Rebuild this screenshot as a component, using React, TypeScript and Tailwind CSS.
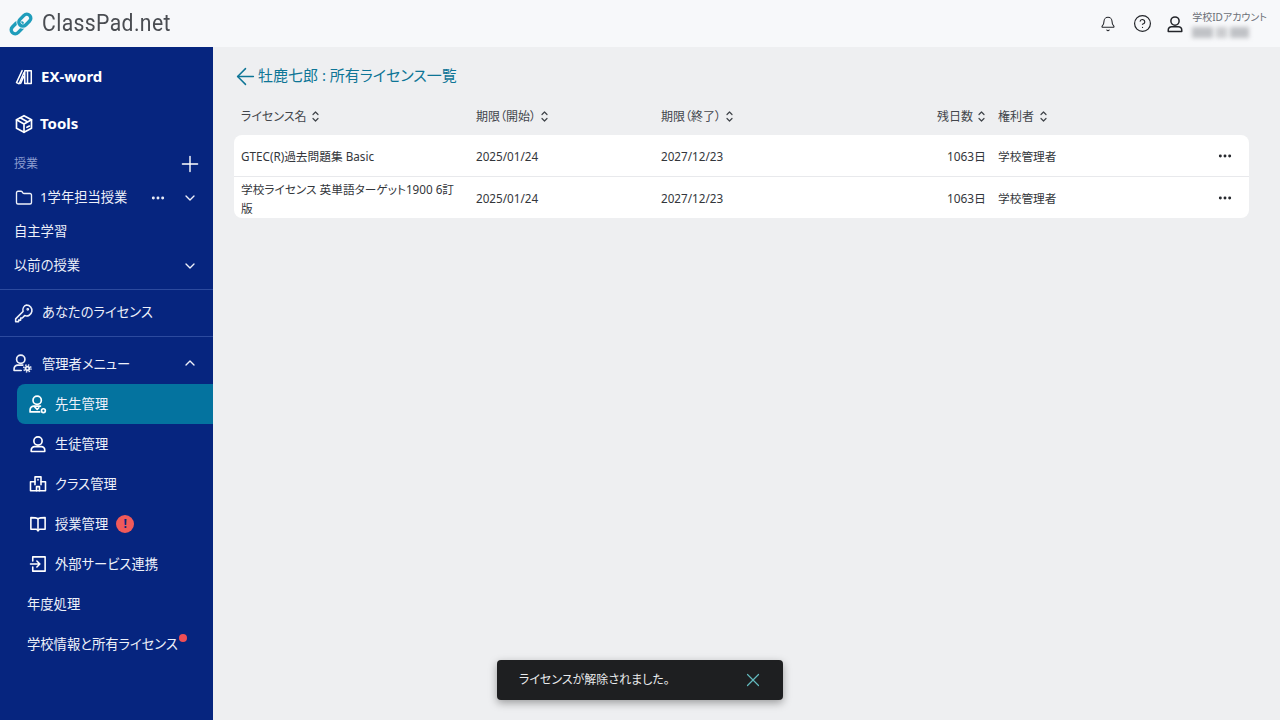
import { ArrowLeft, Bell, ChevronDown, ChevronUp, CircleHelp, Ellipsis, Folder, Plus, X } from 'lucide-react'
import type { ReactNode } from 'react'

const font = "font-['Noto_Sans','Noto_Sans_CJK_JP',sans-serif] [font-feature-settings:'palt']"

function Svg({ children, size = 18, width = 2.1 }: { children: ReactNode; size?: number; width?: number }) {
  return (
    <svg width={size} height={size} viewBox="0 0 24 24" fill="none" stroke="currentColor" strokeWidth={width} strokeLinecap="round" strokeLinejoin="round" className="shrink-0">
      {children}
    </svg>
  )
}

const UserIcon = ({ size = 18, width = 2.2 }: { size?: number; width?: number }) => (
  <Svg size={size} width={width}>
    <circle cx="12" cy="8" r="5.500" />
    <path d="M3 22v-2a4.500 4.500 0 0 1 4.500-4.500h9A4.500 4.500 0 0 1 21 20v2z" />
  </Svg>
)

// admin menu icon: person with a gear
const UserGear = () => (
  <Svg size={20} width={2}>
    <circle cx="10.500" cy="7.500" r="5" />
    <path d="M11 21H2.500v-2a4.500 4.500 0 0 1 4.500-4.500h6" />
    <circle cx="18.500" cy="18.500" r="3.300" fill="currentColor" stroke="none" />
    <circle cx="18.500" cy="18.500" r="1.100" fill="#06257f" stroke="none" />
    <circle cx="18.500" cy="18.500" r="4.300" strokeWidth="1.800" strokeDasharray="1.700 1.700" strokeLinecap="butt" />
  </Svg>
)

// teacher icon: person with a small tag at the lower right
const UserTag = () => (
  <Svg size={20} width={2}>
    <circle cx="11" cy="7.500" r="5" />
    <path d="M14 21.500H2.500v-2.500a4.500 4.500 0 0 1 4.500-4.500h8" />
    <path d="m7.500 15 3.500 3.500 2-2" />
    <circle cx="18.500" cy="20" r="2.300" />
  </Svg>
)

const KeyIcon = () => (
  <Svg size={20} width={1.9}>
    <path d="M15 2.500a6.500 6.500 0 1 1-2.200 12.600L10 18H8v2.500H5.500v2H2V19l8.800-8.800A6.500 6.500 0 0 1 15 2.500z" />
    <circle cx="16.500" cy="7.500" r="0.700" />
  </Svg>
)

const ExWordIcon = () => (
  <Svg size={18} width={2}>
    <path d="M9.500 3.500 2 19.500l3.500 1.500L12 6" />
    <path d="M13 3.500h3.700v17H13zM16.700 3.500h5v17h-5zM7.500 20.500l4-9" />
  </Svg>
)

const BoxIcon = () => (
  <Svg size={20} width={2}>
    <path d="m12 2 9 4.800v10.400L12 22l-9-4.800V6.800z" />
    <path d="M3 7l9 5 9-5M12 12v10M7.500 4.500l9 5M15.500 16l3-1.600" />
  </Svg>
)

const ClassIcon = () => (
  <Svg>
    <path d="M8 9V2.500h8V9h6v12H2V9z" />
    <path d="M8 9v4M16 9v4M10 21v-5.500h4V21M12 6v.5" />
  </Svg>
)

const BookIcon = () => (
  <Svg>
    <path d="M12 5C10 3.800 7 3.500 2.500 3.500v15.500H10l2 2 2-2h7.500V3.500C17 3.500 14 3.800 12 5z" />
    <path d="M12 5v16" />
  </Svg>
)

const ImportIcon = () => (
  <Svg>
    <path d="M5 8V2.500h16.500v19H5V16" />
    <path d="M2 12h12.500M10.500 8l4 4-4 4" />
  </Svg>
)

const SortIcon = () => (
  <svg width="7" height="11" viewBox="0 0 7 11" fill="none" stroke="#3f4349" strokeWidth="1.200" strokeLinecap="round" strokeLinejoin="round" className="shrink-0">
    <path d="M1 3.500 3.500 1 6 3.500M1 7.500 3.500 10 6 7.500" />
  </svg>
)

const Logo = () => (
  <svg width="24" height="24" viewBox="0 0 24 24" fill="none" strokeWidth="3.400" className="shrink-0">
    <g transform="rotate(-45 12 12)">
      <rect x="-0.200" y="8" width="13.600" height="8" rx="4" stroke="#1f9dbb" />
      <rect x="10.600" y="8" width="13.600" height="8" rx="4" stroke="#f7f8fa" strokeWidth="5" />
      <rect x="10.600" y="8" width="13.600" height="8" rx="4" stroke="#1f9dbb" />
    </g>
  </svg>
)

function NavRow({ icon, label, active, badge }: { icon?: ReactNode; label: string; active?: boolean; badge?: ReactNode }) {
  return (
    <div className={`ml-[17px] h-10 flex items-center rounded-l-lg ${icon ? 'pl-[12px] gap-[8px]' : 'pl-[10px]'} ${active ? 'bg-[#04739f]' : ''}`}>
      {icon}
      <span className="text-[13.300px] text-[#eef1fa] whitespace-nowrap pt-[2px]">{label}</span>
      {badge}
    </div>
  )
}

const headers = ['ライセンス名', '期限（開始）', '期限（終了）']
const rows = [
  { name: 'GTEC(R)過去問題集 Basic' },
  { name: '学校ライセンス 英単語ターゲット1900 6訂版' },
]
const gridCols = 'grid grid-cols-[235px_185px_264px_61px_1fr_32px] pl-[7px] items-center'

export default function App() {
  return (
    <div className={`${font} h-[720px] w-[1280px] overflow-hidden relative flex flex-col bg-[#eeeff1]`}>
      {/* Header */}
      <header className="h-[47px] shrink-0 bg-[#f7f8fa] flex items-center pl-[9px] pr-[13px]">
        <Logo />
        <span className="ml-[9px] inline-block origin-left scale-x-[0.92] font-['Roboto',sans-serif] text-[23px] tracking-[0.4px] text-[#4a4d52] leading-none">ClassPad.net</span>
        <div className="ml-auto flex items-center text-[#23252a]">
          <Bell size={16} strokeWidth={1.6} />
          <span className="ml-[17px]"><CircleHelp size={19} strokeWidth={1.5} /></span>
          <span className="ml-[14px]"><UserIcon size={18} width={2} /></span>
          <div className="ml-[8px] flex flex-col">
            <span className="text-[10px] leading-[14px] text-[#6b6f76]">学校IDアカウント</span>
            <div className="mt-[3px] flex gap-[3px] blur-[2px]">
              <div className="h-[11px] w-[21px] bg-[#c0c2c6]" />
              <div className="h-[11px] w-[11px] bg-[#cccdd0]" />
              <div className="h-[11px] w-[19px] bg-[#c0c2c6]" />
            </div>
          </div>
        </div>
      </header>

      <div className="flex flex-1 min-h-0">
        {/* Sidebar */}
        <aside className="w-[213px] shrink-0 bg-[#06257f] text-white flex flex-col">
          <div className="h-[53px] mt-[3px] flex items-center gap-[8px] pl-[15px] font-bold text-[15px]"><ExWordIcon />EX-word</div>
          <div className="h-[41px] flex items-center gap-[6px] pl-[14px] font-bold text-[15px]"><BoxIcon />Tools</div>
          <div className="h-[40px] flex items-center justify-between pl-[14px] pr-[10px]">
            <span className="text-[12px] text-[#8c9dd0]">授業</span>
            <Plus size={26} strokeWidth={1.3} />
          </div>
          <div className="h-[28px] flex items-center pl-[15px] pr-[15px] text-[#eef1fa]">
            <Folder size={18} strokeWidth={1.8} />
            <span className="ml-[7px] text-[13.300px] pb-[1px]">1学年担当授業</span>
            <Ellipsis size={16} strokeWidth={2.4} className="ml-auto mr-[16px]" />
            <ChevronDown size={16} strokeWidth={2} />
          </div>
          <div className="h-[40px] flex items-center pl-[14px] text-[13.300px] text-[#eef1fa]">自主学習</div>
          <div className="h-[28px] flex items-center justify-between pl-[14px] pr-[15px] text-[13.300px] text-[#eef1fa]">
            以前の授業
            <ChevronDown size={16} strokeWidth={2} />
          </div>
          <div className="mt-[9px] border-t border-[#2c4a9e]" />
          <div className="h-[46px] flex items-center gap-[8px] pl-[14px] text-[13.300px] text-[#eef1fa]">
            <KeyIcon />
            <span>あなたのライセンス</span>
          </div>
          <div className="border-t border-[#2c4a9e]" />
          <div className="h-[47px] pt-[5px] flex items-center pl-[12px] pr-[15px] text-[13.300px] text-[#eef1fa]">
            <UserGear />
            <span className="ml-[10px] pt-[4px]">管理者メニュー</span>
            <ChevronUp size={16} strokeWidth={2} className="ml-auto" />
          </div>
          <div className="flex flex-col [&>div:first-child]:gap-[7px] [&>div:first-child]:pl-[11px]">
            <NavRow active icon={<UserTag />} label="先生管理" />
          </div>
          <NavRow icon={<UserIcon />} label="生徒管理" />
          <NavRow icon={<ClassIcon />} label="クラス管理" />
          <NavRow
            icon={<BookIcon />}
            label="授業管理"
            badge={<span className="w-[18px] h-[18px] rounded-full bg-[#f05a5a] text-[#06257f] text-[12px] font-bold flex items-center justify-center">!</span>}
          />
          <NavRow icon={<ImportIcon />} label="外部サービス連携" />
          <NavRow label="年度処理" />
          <div className="relative">
            <NavRow label="学校情報と所有ライセンス" />
            <span className="absolute left-[179px] top-[10px] w-2 h-2 rounded-full bg-[#ef4e55]" />
          </div>
        </aside>

        {/* Main */}
        <main className="flex-1 min-w-0 pl-[21px] pr-[31px]">
          <div className="mt-[17px] h-6 flex items-center text-[#0d7596] -ml-[2px]">
            <ArrowLeft size={27} strokeWidth={1.3} />
            <span className="text-[15px] pb-[1px] -ml-[1px]">牡鹿七郎 : 所有ライセンス一覧</span>
          </div>

          <div className={`${gridCols} mt-[16px] h-[24px] text-[12px] text-[#43464c]`}>
            {headers.map((h) => (
              <div key={h} className="flex items-center gap-[5px]"><span className="pt-[2px]">{h}</span><SortIcon /></div>
            ))}
            <div className="flex items-center justify-end gap-[5px] pr-[1px]"><span className="pt-[2px]">残日数</span><SortIcon /></div>
            <div className="flex items-center gap-[6px] pl-3"><span className="pt-[2px]">権利者</span><SortIcon /></div>
            <div />
          </div>

          <div className="mt-[7px] bg-white rounded-lg text-[11.700px] text-[#33363b]">
            {rows.map((r, i) => (
              <div key={r.name} className={`${gridCols} h-[41px] ${i > 0 ? 'border-t border-[#e8e9ec] box-content' : ''}`}>
                <div className={`pr-[18px] leading-[19px] ${i > 0 ? 'pt-[3px]' : 'pt-[2px]'}`}>{r.name}</div>
                <div className="pt-[2px]">2025/01/24</div>
                <div className="pt-[2px]">2027/12/23</div>
                <div className="text-right pt-[2px] text-[11.900px]">1063日</div>
                <div className="pl-3 pt-[2px]">学校管理者</div>
                <div className="text-[#23252a]"><Ellipsis size={16} strokeWidth={2.4} /></div>
              </div>
            ))}
          </div>
        </main>
      </div>

      {/* Toast */}
      <div className="absolute left-[497px] top-[660px] w-[286px] h-10 rounded bg-[#1e1f21] shadow-[0_3px_8px_rgba(0,0,0,0.35)] flex items-center justify-between pl-[22px] pr-[19px]">
        <span className="text-[12px] text-[#e9eaec]">ライセンスが解除されました。</span>
        <X size={22} strokeWidth={1.3} className="text-[#62b9bd]" />
      </div>
    </div>
  )
}
